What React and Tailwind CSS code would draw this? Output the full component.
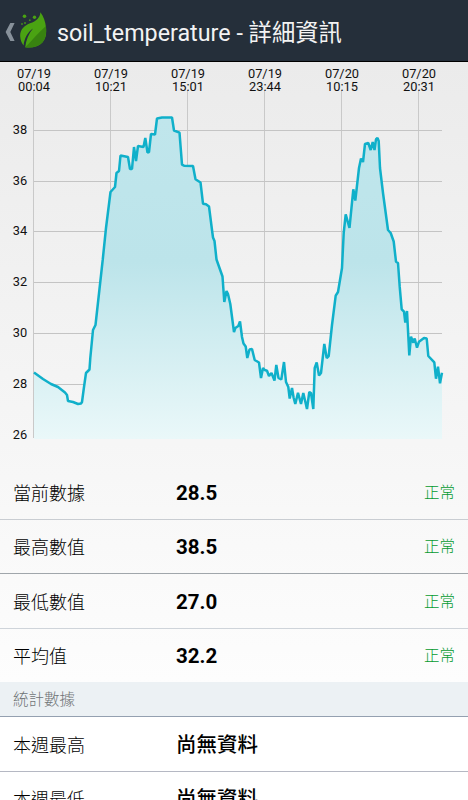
import React from "react";

// [x, y] positions of every sample on the curve
const POINTS = [
  [34, 372.5], [43, 379], [51, 384], [58, 387], [65, 392.5], [67, 395], [68, 401], [73, 402], [78, 404], [81, 403.5], [82, 402],
  [84, 387], [86, 373], [89.5, 369.5], [90.3, 358], [93, 330], [95.5, 325], [102.7, 260], [106, 228], [110.5, 192],
  [115, 187], [116.5, 173], [119, 171], [120.5, 155.5], [128, 157], [130, 169], [132, 169], [134, 147], [136, 161],
  [138, 146], [143.5, 147], [145.3, 138], [147.5, 152.5], [149, 152], [151, 134], [155, 134.5], [157, 118.5],
  [162, 117.5], [172, 117.5], [174, 130.5], [179.5, 132.7], [182, 164.7], [184, 165.7], [193, 166], [195.5, 179.3],
  [200.5, 182.5], [203, 203.7], [206, 204.3], [209, 206.5], [212, 230], [213, 237.5], [214.5, 241], [216.5, 259.5],
  [222.5, 276.5], [224.3, 302], [226.5, 291], [228, 294], [230.3, 304], [234, 332], [235.3, 328], [238.3, 326],
  [240, 321.5], [242, 337], [243.5, 343.5], [245.7, 346.5], [247.3, 358], [249.5, 349.5], [252, 349], [254.7, 360],
  [259, 362.5], [261, 378], [263, 368], [264.7, 370], [267, 370.7], [269, 376], [271.5, 373], [274.5, 380.5],
  [276.3, 365], [278.5, 378], [281.3, 379.5], [284, 362], [286, 382], [288.3, 387], [289.7, 398.5], [292, 388],
  [293.7, 398], [295.3, 404], [298, 392.7], [301, 404], [303.3, 393], [307, 409], [309.3, 392], [311, 393],
  [313.3, 409], [314.7, 368], [316.7, 362.5], [319, 375.5], [321, 373], [324.3, 344], [326.7, 358], [328.7, 356],
  [332, 325], [335.7, 295.7], [338, 292], [342, 268], [343.7, 233], [345.7, 214.3], [349.5, 228], [353.3, 189.3],
  [355.3, 200.5], [359, 168], [361, 158.5], [363, 162], [365, 144], [368.3, 143], [370.7, 150], [372.7, 142],
  [374.5, 150], [376, 139.3], [377.5, 138], [378.7, 141], [380, 168], [383, 193], [388, 230], [390.7, 233],
  [393.7, 241.5], [396, 261.7], [398, 263], [399.7, 286.7], [401.7, 309.3], [404, 311.7], [405.3, 322.5], [407, 311],
  [409.3, 355.5], [411, 336.7], [413.3, 342.7], [414.7, 338.5], [417, 347.7], [419, 341.7], [424, 338],
  [426.7, 338.5], [428.3, 356], [434.3, 362.3], [436, 378.7], [438, 366.7], [440, 383.3], [442, 372.7],
];

const X_LABELS = [
  { x: 34, date: "07/19", time: "00:04" },
  { x: 111, date: "07/19", time: "10:21" },
  { x: 188, date: "07/19", time: "15:01" },
  { x: 265, date: "07/19", time: "23:44" },
  { x: 342, date: "07/20", time: "10:15" },
  { x: 419, date: "07/20", time: "20:31" },
];

const Y_LABELS = [
  { y: 130.5, value: 38 },
  { y: 181.5, value: 36 },
  { y: 231.5, value: 34 },
  { y: 282.5, value: 32 },
  { y: 333.5, value: 30 },
  { y: 384.5, value: 28 },
  { y: 435.5, value: 26 },
];

const LINE = POINTS.map((p) => p.join(",")).join(" ");

const LeafLogo = () => (
  <svg viewBox="0 0 28 36" className="w-7 h-9 shrink-0">
    <path d="M21.4 0.2C21 5.5 17.5 9.2 11 11.3C4.5 13.8 0.8 18.5 1.2 24.5C1.4 28.5 3 31.7 4.6 33.4C5.3 26.5 8.5 20.5 14 16.5C9.8 21.5 7 28 6.2 35.2C13 36.1 19.5 34.7 23.4 30.4C27.3 26 27.5 20.8 27 15.5C26.5 9.5 24.5 4.5 21.4 0.2Z" fill="#4aa312" />
    <path d="M27 14C20.5 19.5 14.5 27 6.2 35.2C13 36.1 19.5 34.7 23.4 30.4C27.3 26 27.4 19.5 27 14Z" fill="#388210" />
    <circle cx="5.5" cy="4.2" r="1.8" fill="#4aa312" />
    <circle cx="15.5" cy="5.2" r="1.7" fill="#4aa312" />
    <circle cx="10.8" cy="8.2" r="0.9" fill="#438f1b" />
    <circle cx="6" cy="11" r="1" fill="#438f1b" />
    <circle cx="3" cy="12" r="0.9" fill="#438f1b" />
  </svg>
);

const Header = () => (
  <header className="flex items-center shrink-0 h-[62px] bg-[#252f3a] border-b border-black">
    <svg viewBox="0 0 10 20" className="ml-[5px] mt-0.5 w-2.5 h-5 shrink-0">
      <path d="M5.3 1H9.6L5.3 10L9.6 19H5.3L0.6 10Z" fill="#87919a" />
    </svg>
    <div className="ml-1 mb-px">
      <LeafLogo />
    </div>
    <h1 className="ml-2.5 mt-[5px] text-[23.3px] leading-8 whitespace-nowrap text-[#f3f3f3]">
      soil_temperature - 詳細資訊
    </h1>
  </header>
);

const Chart = () => (
  <svg viewBox="0 62 468 403" className="block w-full h-[403px]">
    <defs>
      <linearGradient id="area" gradientUnits="userSpaceOnUse" x1="0" y1="117" x2="0" y2="439">
        <stop offset="0" stopColor="#c0e6ec" />
        <stop offset="0.45" stopColor="#bce4ea" />
        <stop offset="1" stopColor="#eaf8f9" />
      </linearGradient>
    </defs>

    {/* Grid */}
    {X_LABELS.map(({ x }) => (
      <line key={x} x1={x - 0.5} x2={x - 0.5} y1="90" y2="438" stroke="#c9c9c9" />
    ))}
    {Y_LABELS.slice(0, 6).map(({ y }) => (
      <line key={y} x1="34" x2="442" y1={y} y2={y} stroke="#c4c4c4" />
    ))}

    {/* Curve */}
    <polygon points={`34,439 ${LINE} 442,439`} fill="url(#area)" />
    <polyline points={LINE} fill="none" stroke="#10b0ca" strokeWidth="2.5" strokeLinejoin="bevel" />

    {/* Labels */}
    <g fontSize="12.8" fill="#111111" textAnchor="middle">
      {X_LABELS.map(({ x, date, time }) => (
        <g key={x}>
          <text x={x} y="78">{date}</text>
          <text x={x} y="91.3">{time}</text>
        </g>
      ))}
      {Y_LABELS.map(({ y, value }) => (
        <text key={value} x="20" y={y + 3.5}>{value}</text>
      ))}
    </g>
  </svg>
);

const Row = ({ label, value, status, border = "border-transparent", weight = "font-bold" }) => (
  <div className={`flex items-center shrink-0 h-[54.5px] pt-[3px] pl-[13px] pr-[13px] border-b ${border}`}>
    <span className="w-[163px] text-[18px] font-light text-black">{label}</span>
    <span className={`text-[20.5px] text-black ${weight}`}>{value}</span>
    <span className="ml-auto text-[15.5px] font-light text-[#059a30]">{status}</span>
  </div>
);

export default function App() {
  return (
    <div className="flex flex-col w-[468px] h-[800px] overflow-hidden bg-white font-[Roboto,'Noto_Sans_CJK_TC',sans-serif]">
      <Header />
      <div className="shrink-0 h-[620px] overflow-hidden bg-linear-to-b from-[#ebebeb] to-[#fdfdfd]">
        <Chart />
        <Row label="當前數據" value="28.5" status="正常" border="border-[#c9cdd2]" />
        <Row label="最高數值" value="38.5" status="正常" border="border-[#a0a6ab]" />
        <Row label="最低數值" value="27.0" status="正常" border="border-[#cfd4da]" />
        <Row label="平均值" value="32.2" status="正常" />
      </div>
      <div className="flex items-center shrink-0 h-[35px] pt-1 pl-[13px] bg-[#ecf1f4] border-b border-[#94a0b0] text-[15.5px] font-light text-[#707476]">
        統計數據
      </div>
      <Row label="本週最高" value="尚無資料" border="border-[#b5b8c3]" weight="font-medium" />
      <Row label="本週最低" value="尚無資料" weight="font-medium" />
    </div>
  );
}
